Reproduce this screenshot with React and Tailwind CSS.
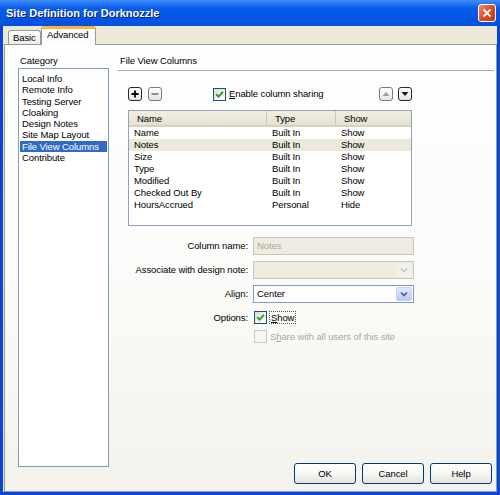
import React from 'react';

const categories = [
  'Local Info',
  'Remote Info',
  'Testing Server',
  'Cloaking',
  'Design Notes',
  'Site Map Layout',
  'File View Columns',
  'Contribute',
];

const columns = [
  { name: 'Name', type: 'Built In', show: 'Show' },
  { name: 'Notes', type: 'Built In', show: 'Show', selected: true },
  { name: 'Size', type: 'Built In', show: 'Show' },
  { name: 'Type', type: 'Built In', show: 'Show' },
  { name: 'Modified', type: 'Built In', show: 'Show' },
  { name: 'Checked Out By', type: 'Built In', show: 'Show' },
  { name: 'HoursAccrued', type: 'Personal', show: 'Hide' },
];

function Check({ checked, disabled }) {
  return (
    <span
      className={`w-[13px] h-[13px] shrink-0 border flex items-center justify-center ${
        disabled ? 'border-[#CAC8BB] bg-[#F6F5F1]' : 'border-[#1C5180] bg-linear-to-br from-[#DCDCD7] to-white'
      }`}
    >
      {checked && (
        <svg width="9" height="9" viewBox="0 0 9 9">
          <path d="M1.2 4.2 L3.5 6.6 L7.9 1.8" stroke="#21A121" strokeWidth="1.9" fill="none" />
        </svg>
      )}
    </span>
  );
}

function ComboArrow({ disabled }) {
  return (
    <span
      className={`w-[16px] h-full flex items-center justify-center rounded-[2px] border ${
        disabled
          ? 'border-[#F0EFEA] bg-[#F1F0EB]'
          : 'border-[#C3D3FD] bg-linear-to-b from-[#E1EAFE] to-[#B5C9F7]'
      }`}
    >
      <svg width="8" height="6" viewBox="0 0 8 6">
        <path d="M1 1.5 L4 4.5 L7 1.5" stroke={disabled ? '#C9C7BA' : '#4D6185'} strokeWidth="1.6" fill="none" />
      </svg>
    </span>
  );
}

function SmallButton({ children, dim }) {
  return (
    <span
      className={`w-[14px] h-[14px] rounded-[3px] border flex items-center justify-center bg-linear-to-b from-white to-[#E6E5DF] ${
        dim ? 'border-[#6E7C8C]' : 'border-[#1E2A36]'
      }`}
    >
      {children}
    </span>
  );
}

function DialogButton({ label }) {
  return (
    <button className="w-[62px] h-[21px] rounded-[3px] border border-[#003C74] bg-linear-to-b from-white via-[#F7F7F4] to-[#E3E2DA] text-[9.5px] text-black">
      {label}
    </button>
  );
}

export default function App() {
  return (
    <div className="w-[500px] h-[495px] flex flex-col bg-[#0845D8] font-['Liberation_Sans',Arial,sans-serif] text-[9.5px] tracking-[-0.1px] text-black leading-[12px] overflow-hidden">
      {/* title bar */}
      <div className="h-[26px] shrink-0 flex items-center justify-between pl-[6px] pr-[4px] bg-linear-to-b from-[#3D8EF8] via-[#0A5CEB] via-30% to-[#0050DD]">
        <span className="text-white font-bold text-[11px] tracking-normal [text-shadow:1px_1px_0_#0A1E6A]">Site Definition for Dorknozzle</span>
        <span className="w-[18px] h-[18px] rounded-[3px] border border-white bg-linear-to-br from-[#EE8B6A] via-[#DD4B22] to-[#C1391A] flex items-center justify-center">
          <svg width="10" height="10" viewBox="0 0 10 10">
            <path d="M1.5 1.5 L8.5 8.5 M8.5 1.5 L1.5 8.5" stroke="white" strokeWidth="1.8" />
          </svg>
        </span>
      </div>

      {/* body */}
      <div className="flex-1 flex flex-col mx-[3px] mb-[3px] bg-[#ECE9D8]">
        {/* tabs */}
        <div className="h-[18px] shrink-0 flex items-end pl-[5px]">
          <div className="h-[14px] w-[33px] border border-b-0 border-[#919B9C] rounded-t-[3px] bg-linear-to-b from-white to-[#ECEBE5] pl-[4px] pt-[1px]">
            Basic
          </div>
          <div className="relative z-10 -mb-[1px] h-[19px] w-[55px] border border-b-0 border-[#919B9C] rounded-t-[3px] bg-[#FCFCFE] border-t-[3px] border-t-[#FFB23C] pl-[5px]">
            Advanced
          </div>
        </div>

        {/* panel */}
        <div className="flex-1 flex border border-[#919B9C] bg-linear-to-b from-[#FEFEFE] via-[#FBFBF9] to-[#F3F2EC] ml-[1px] pl-[13px]">
          {/* left column */}
          <div className="w-[91px] flex flex-col pt-[10px]">
            <div className="h-[13px] pl-[2px]">Category</div>
            <div className="h-[399px] border border-[#7F9DB9] bg-white pt-[4px] px-[1px]">
              {categories.map((c) => (
                <div
                  key={c}
                  className={`h-[11.3px] leading-[11px] pl-[2px] ${c === 'File View Columns' ? 'bg-[#316AC5] text-white' : ''}`}
                >
                  {c}
                </div>
              ))}
            </div>
          </div>

          {/* right column */}
          <div className="flex-1 flex flex-col pl-[9px] pr-[2px] pt-[10px] pb-[7px]">
            <div className="h-[16px] border-b border-[#A7A6AA] pl-[2px]">File View Columns</div>

            <div className="pl-[10px] w-[294px]">
              <div className="mt-[16px] h-[14px] flex items-center">
                <SmallButton>
                  <svg width="8" height="8" viewBox="0 0 8 8">
                    <path d="M4 0.5 V7.5 M0.5 4 H7.5" stroke="#000" strokeWidth="1.8" />
                  </svg>
                </SmallButton>
                <span className="ml-[6px]">
                  <SmallButton dim>
                    <svg width="8" height="8" viewBox="0 0 8 8">
                      <path d="M0.5 4 H7.5" stroke="#44505C" strokeWidth="1.2" />
                    </svg>
                  </SmallButton>
                </span>
                <span className="ml-[51px] flex items-center gap-[3px]">
                  <Check checked />
                  <span>
                    <span className="underline">E</span>nable column sharing
                  </span>
                </span>
                <span className="ml-auto flex gap-[5px]">
                  <SmallButton dim>
                    <svg width="8" height="6" viewBox="0 0 8 6">
                      <path d="M0.5 5 L4 1 L7.5 5 Z" fill="#9AA0A8" />
                    </svg>
                  </SmallButton>
                  <SmallButton>
                    <svg width="8" height="6" viewBox="0 0 8 6">
                      <path d="M0.5 1 L4 5 L7.5 1 Z" fill="#1A1A1A" />
                    </svg>
                  </SmallButton>
                </span>
              </div>

              {/* columns table */}
              <div className="mt-[9px] w-[284px] h-[116px] border border-[#8EA4BE] bg-white flex flex-col">
                <div className="h-[16px] shrink-0 flex bg-linear-to-b from-[#F1EFE2] to-[#E5E2D2] border-b-[2px] border-[#D6D2C2]">
                  <div className="w-[138px] pl-[8px] pt-[2px] border-r border-[#CBC7B8]">Name</div>
                  <div className="w-[69px] pl-[8px] pt-[2px] border-r border-[#CBC7B8]">Type</div>
                  <div className="flex-1 pl-[8px] pt-[2px] mr-[1px]">Show</div>
                </div>
                {columns.map((r) => (
                  <div key={r.name} className={`h-[12px] flex leading-[12px] ${r.selected ? 'bg-[#ECE9DA]' : ''}`}>
                    <div className="w-[138px] pl-[5px]">{r.name}</div>
                    <div className="w-[69px] pl-[5px]">{r.type}</div>
                    <div className="flex-1 pl-[5px]">{r.show}</div>
                  </div>
                ))}
              </div>
            </div>

            {/* form */}
            <div className="mt-[11px] flex flex-col">
              <div className="flex items-center h-[18px]">
                <span className="w-[131px] text-right pr-[1px]">Column name:</span>
                <span className="ml-[4px] w-[161px] h-full border border-[#C9C7BA] bg-[#EEEBE1] text-[#ACA899] pl-[3px] leading-[16px]">
                  Notes
                </span>
              </div>
              <div className="flex items-center h-[18px] mt-[6px]">
                <span className="w-[131px] text-right pr-[1px]">Associate with design note:</span>
                <span className="ml-[4px] w-[161px] h-full border border-[#C9C7BA] bg-[#EEEBE1] flex justify-end p-[1px]">
                  <ComboArrow disabled />
                </span>
              </div>
              <div className="flex items-center h-[18px] mt-[6px]">
                <span className="w-[131px] text-right pr-[1px]">Align:</span>
                <span className="ml-[4px] w-[161px] h-full border border-[#7F9DB9] bg-white flex items-center p-[1px]">
                  <span className="flex-1 pl-[2px]">Center</span>
                  <ComboArrow />
                </span>
              </div>
              <div className="flex items-center h-[13px] mt-[8px]">
                <span className="w-[131px] text-right pr-[1px]">Options:</span>
                <span className="ml-[5px] flex items-center gap-[2px]">
                  <Check checked />
                  <span className="border border-dotted border-[#555] px-[1px] leading-[11px]">
                    <span className="underline">S</span>how
                  </span>
                </span>
              </div>
              <div className="flex items-center h-[13px] mt-[6px]">
                <span className="w-[131px]" />
                <span className="ml-[5px] flex items-center gap-[3px] text-[#ACA899]">
                  <Check disabled />
                  <span>
                    S<span className="underline">h</span>are with all users of this site
                  </span>
                </span>
              </div>
            </div>

            <div className="flex-1" />

            <div className="flex justify-end gap-[6px] pr-[2px]">
              <DialogButton label="OK" />
              <DialogButton label="Cancel" />
              <DialogButton label="Help" />
            </div>
          </div>
        </div>
      </div>
    </div>
  );
}
